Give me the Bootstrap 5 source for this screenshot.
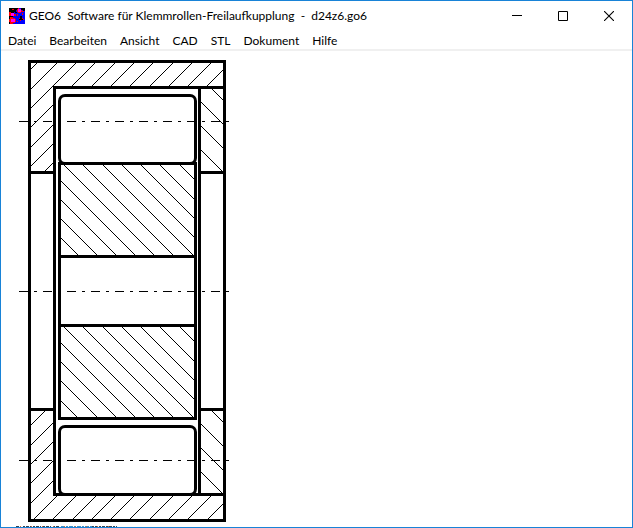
<!DOCTYPE html>
<html lang="de">
<head>
<meta charset="utf-8">
<meta name="viewport" content="width=device-width, initial-scale=1">
<title>GEO6 Software für Klemmrollen-Freilaufkupplung - d24z6.go6</title>
<link href="https://cdn.jsdelivr.net/npm/bootstrap@5.3.0/dist/css/bootstrap.min.css" rel="stylesheet">
<style>
  body { font-family: Lato, "Open Sans", sans-serif; font-size: 12px; line-height: 16px; color: #000; background: #fff; }
  .app-window { border: 1px solid #1883d7; }
  .title-bar { height: 30px; padding-left: 8px; }
  .title-text { font-size: 12px; line-height: 16px; font-weight: 400; white-space: pre; }
  .win-btn { width: 46px; height: 28px; }
  .win-btn:hover, .menu-item:hover { background: #e5f3ff; }
  .menu-strip { padding-left: 7px; gap: 13px; border-bottom: 2px solid #f0f0f0; }
  .menu-item { padding: 2px 0 0; font-size: 12px; line-height: 16px; color: #000; }
  .outline { fill: none; stroke: #000; stroke-width: 3; stroke-linecap: square; }
  .hatch { fill: none; stroke: #000; stroke-width: 1; shape-rendering: crispEdges; }
  .axis { fill: none; stroke: #000; stroke-width: 1; stroke-dasharray: 9 6 3 6; }
</style>
<script src="https://cdn.jsdelivr.net/npm/bootstrap@5.3.0/dist/js/bootstrap.bundle.min.js"></script>
</head>
<body>
<div class="app-window d-flex flex-column min-vh-100">
  <header class="title-bar d-flex align-items-center">
    <svg class="flex-shrink-0" width="16" height="16" viewBox="0 0 16 16" shape-rendering="crispEdges" aria-hidden="true">
      <path fill="#00f" d="M0 0h16v16H0z"/>
      <path fill="#000" d="M0 0h9v2H7v2H5v2H4v5H2v1H0zM12 0h4v3h-2V2h-2zM0 13h2v1h2v2H0zM11 8h2v2h-2zM6 4h2v1H6z"/>
      <path fill="#f00" d="M3 1h2v1H3zM9 0h1v1h2v1h1v2h-1v1H9V4H8V1h1zM0 4h2v1h1v2H2v1H0zM1 9h3v1h2v1h1v3H6v1H4v2H2v-1H1v-2H0v-3h1zM13 3h2v1h-2zM5 6h2v2H5zM13 5h1v2h-1zM8 6h1v2H8zM10 10h1v1h-1zM13 10h1v1h-1zM11 12h1v1h-1zM14 11h1v1h-1zM8 13h1v1H8z"/>
      <path fill="#000" d="M11 10h2v2h-2zM13 11h1v1h-1zM10 11h1v1h-1z"/>
      <path fill="#f0f" d="M9 1h3v3H9zM2 5h3v3H2zM2 11h4v3H2z"/>
    </svg>
    <h1 class="title-text mb-0 ms-1 flex-grow-1">GEO6  Software für Klemmrollen-Freilaufkupplung  -  d24z6.go6</h1>
    <div class="d-flex flex-shrink-0">
      <button type="button" class="win-btn btn border-0 rounded-0 p-0 d-flex align-items-center justify-content-center" aria-label="Minimieren">
        <svg width="10" height="10" viewBox="0 0 10 10"><path d="M0 4.500h10" stroke="#000"/></svg>
      </button>
      <button type="button" class="win-btn btn border-0 rounded-0 p-0 d-flex align-items-center justify-content-center" aria-label="Maximieren">
        <svg width="10" height="10" viewBox="0 0 10 10"><path d="M.5.5h9v9h-9z" fill="none" stroke="#000"/></svg>
      </button>
      <button type="button" class="win-btn btn border-0 rounded-0 p-0 d-flex align-items-center justify-content-center" aria-label="Schließen">
        <svg width="10" height="10" viewBox="0 0 10 10"><path d="M0 0l10 10M10 0L0 10" stroke="#000" stroke-width="1.100"/></svg>
      </button>
    </div>
  </header>
  <nav class="menu-strip d-flex" aria-label="Hauptmenü">
    <button type="button" class="menu-item btn border-0 rounded-0">Datei</button>
    <button type="button" class="menu-item btn border-0 rounded-0">Bearbeiten</button>
    <button type="button" class="menu-item btn border-0 rounded-0">Ansicht</button>
    <button type="button" class="menu-item btn border-0 rounded-0">CAD</button>
    <button type="button" class="menu-item btn border-0 rounded-0">STL</button>
    <button type="button" class="menu-item btn border-0 rounded-0">Dokument</button>
    <button type="button" class="menu-item btn border-0 rounded-0">Hilfe</button>
  </nav>
  <main class="flex-grow-1">
    <svg class="d-block" width="240" height="476" viewBox="1 51 240 476" role="img" aria-label="Längsschnitt der Klemmrollen-Freilaufkupplung">
      <defs>
        <clipPath id="ringTop"><path d="M31 63H223V86H53V171H31z"/></clipPath>
        <clipPath id="ringBottom"><path d="M31 411H53V496H223V519H31z"/></clipPath>
        <clipPath id="discTop"><path d="M201 89H223V171H201z"/></clipPath>
        <clipPath id="discBottom"><path d="M201 411H223V493H201z"/></clipPath>
        <clipPath id="hubTop"><path d="M61 165H194V255H61z"/></clipPath>
        <clipPath id="hubBottom"><path d="M61 327H194V417H61z"/></clipPath>
      </defs>
      <!-- housing ring -->
      <path class="hatch" clip-path="url(#ringTop)" d="M40 60l-20 20M60 60l-40 40M79 60l-59 59M98 60l-78 78M118 60l-98 98M137 60L20 177M156 60L36 180M176 60L56 180M195 60l-40 40M214 60l-40 40M233 60l-40 40"/>
      <path class="hatch" clip-path="url(#ringBottom)" d="M56 400l-36 36M76 400l-56 56M95 400l-75 75M114 400l-94 94M134 400L20 514M153 400L33 520M172 400L52 520M112 480l-40 40M131 480l-40 40M150 480l-40 40M169 480l-40 40M189 480l-40 40M208 480l-40 40M227 480l-40 40M247 480l-40 40"/>
      <!-- side disc -->
      <path class="hatch" clip-path="url(#discTop)" d="M200 77l30 30M200 101l30 30M200 125l30 30M200 149l30 30"/>
      <path class="hatch" clip-path="url(#discBottom)" d="M200 399l30 30M200 423l30 30M200 447l30 30M200 471l30 30"/>
      <!-- hub -->
      <path class="hatch" clip-path="url(#hubTop)" d="M60 237l30 30M60 218l50 50M60 199l70 70M60 180l90 90M60 161l110 110M78 160l110 110M98 160l110 110M117 160l110 110M136 160l80 80M155 160l60 60M175 160l40 40"/>
      <path class="hatch" clip-path="url(#hubBottom)" d="M60 400l30 30M60 380l50 50M60 361l70 70M60 342l90 90M60 323l110 110M79 323l110 110M99 323l110 110M118 323l100 100M137 323l80 80M156 323l60 60M176 323l40 40"/>
      <!-- visible edges -->
      <path class="outline" d="M29.500 61.500H224.500V520.500H29.500zM224.500 87.500H54.500V494.500H224.500M199.500 87.500V494.500M29.500 172.500H54.500M199.500 172.500H224.500M29.500 409.500H54.500M199.500 409.500H224.500"/>
      <path class="outline" d="M59.500 163.500H195.500V418.500H59.500zM59.500 256.500H195.500M59.500 325.500H195.500"/>
      <rect class="outline" x="59.500" y="95.500" width="136" height="68" rx="5.500"/>
      <rect class="outline" x="59.500" y="426.500" width="136" height="68" rx="5.500"/>
      <!-- centre lines -->
      <path class="axis" d="M19 121.500H229"/>
      <path class="axis" d="M19 291.500H229"/>
      <path class="axis" d="M19 460.500H229"/>
      <!-- status trace along the lower edge -->
      <path d="M16 526.500H60" fill="none" stroke="#345" stroke-dasharray="3 1 1 2 2 1"/>
      <path d="M61 526.500H92" fill="none" stroke="#3d8fc4" stroke-dasharray="4 1 2 1"/>
      <path d="M92 526.500H117" fill="none" stroke="#345" stroke-dasharray="2 1 3 1"/>
      <path d="M20 526.500H116" fill="none" stroke="#c96a3a" stroke-dasharray="1 10"/>
    </svg>
  </main>
</div>
</body>
</html>
